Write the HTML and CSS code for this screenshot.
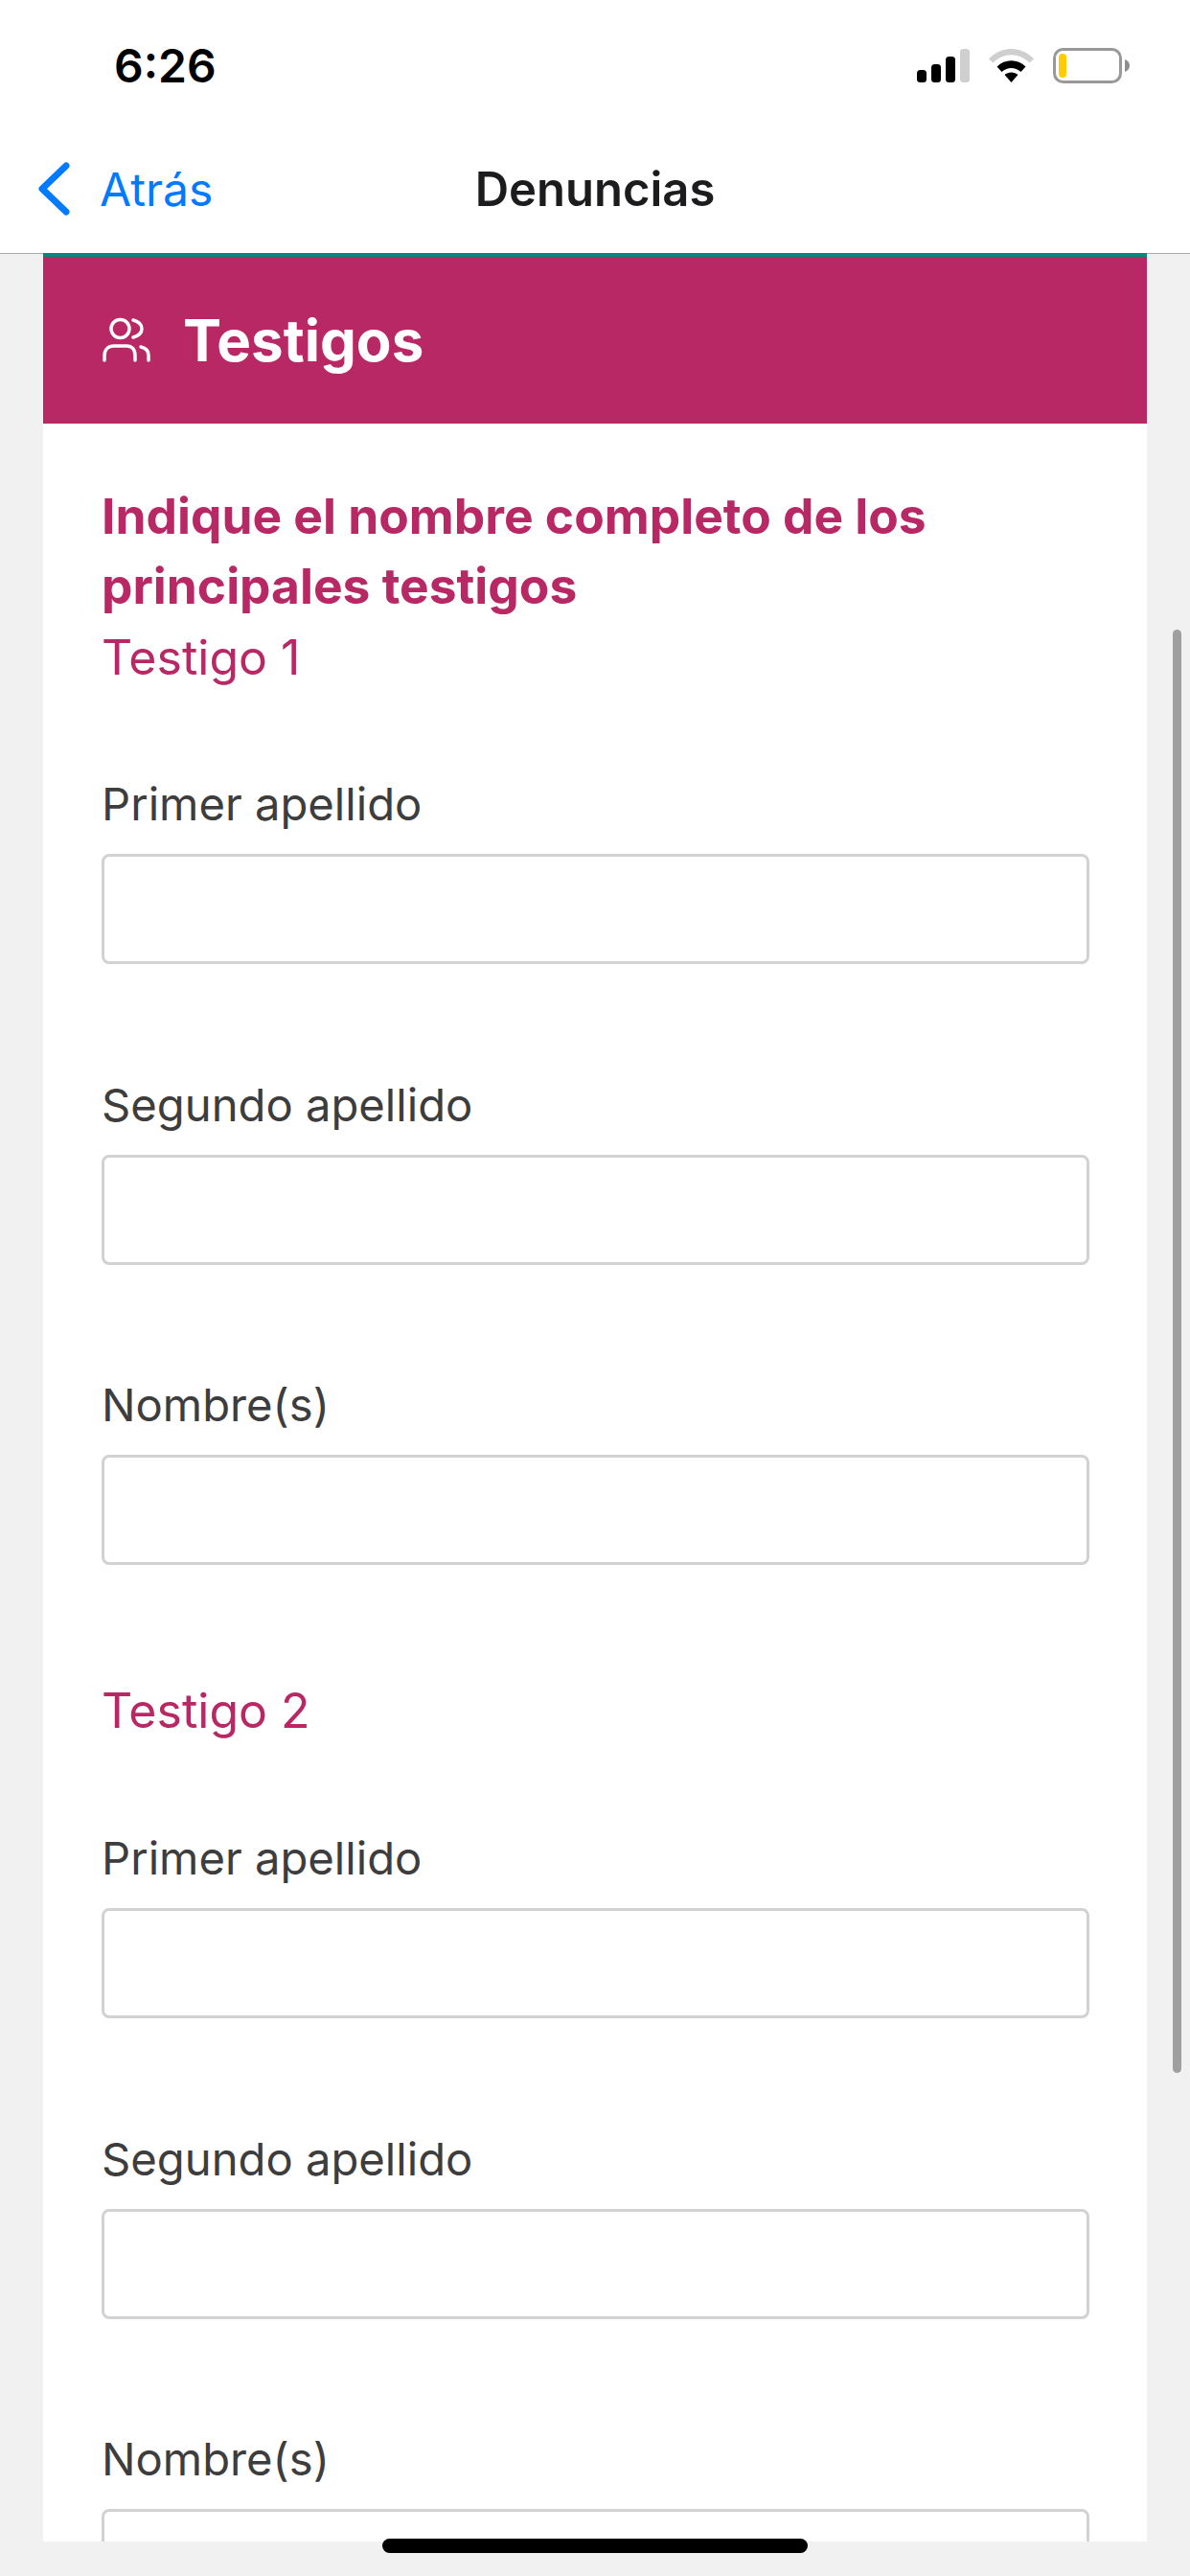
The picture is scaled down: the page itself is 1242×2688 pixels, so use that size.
FILE: index.html
```html
<!DOCTYPE html>
<html lang="es">
<head>
  <meta charset="UTF-8" />
  <meta name="viewport" content="width=device-width, initial-scale=1.0"/>
  <title>Denuncias</title>
  <link rel="stylesheet" href="styles.css">
</head>
<body>
  <div class="pantalla">
    <header class="cabecera">
      <div class="estado">
        <span class="hora">6:26</span>
        <div class="iconos-estado">
          <!-- señal -->
          <svg class="icono-senal" viewBox="0 0 55 35">
            <rect x="0" y="22" width="10" height="13" rx="3.5" fill="#000"/>
            <rect x="15" y="16" width="10" height="19" rx="3.5" fill="#000"/>
            <rect x="30" y="8" width="10" height="27" rx="3.5" fill="#000"/>
            <rect x="45" y="0" width="10" height="35" rx="3.5" fill="#cfcfcf"/>
          </svg>
          <!-- wifi -->
          <svg class="icono-wifi" viewBox="0 0 47 35">
            <path d="M0 10.500C13 -3.500 34 -3.500 47 10.500L42.500 14.500C31.500 3.500 15.500 3.500 4.500 14.500Z" fill="#cfcfcf"/>
            <path d="M8.500 18.500C17 10 30 10 38.500 18.500L33.500 24C27 18.500 20 18.500 13.500 24Z" fill="#000"/>
            <path d="M16.500 27C20.500 23.500 26.500 23.500 30.500 27L23.500 35Z" fill="#000"/>
          </svg>
          <!-- bateria -->
          <svg class="icono-bateria" viewBox="0 0 80 37">
            <rect x="1.500" y="1.500" width="69" height="34" rx="9" fill="none" stroke="#999" stroke-width="3"/>
            <rect x="6" y="6" width="8" height="25" rx="4" fill="#ffcc00"/>
            <path d="M75 12C78 13 80 15.500 80 18.500C80 21.500 78 24 75 25Z" fill="#8e8e8e"/>
          </svg>
        </div>
      </div>
      <nav class="barra">
        <a class="atras">
          <svg class="icono-atras" viewBox="0 0 33 56">
            <path d="M29 4L4 28L29 52" fill="none" stroke="#007aff" stroke-width="7" stroke-linecap="round" stroke-linejoin="round"/>
          </svg>
          <span>Atrás</span>
        </a>
        <h1 class="titulo">Denuncias</h1>
      </nav>
    </header>

    <main class="contenido">
      <section class="tarjeta">
        <div class="tarjeta-titulo">
          <svg class="icono-testigos" viewBox="0 0 50 50">
            <circle cx="18.500" cy="13" r="9.500" fill="none" stroke="#fff" stroke-width="3.500"/>
            <path d="M32 4C37.500 5.500 41 9 41 13C41 17 37.500 20.500 32 22" fill="none" stroke="#fff" stroke-width="3.500" stroke-linecap="round"/>
            <path d="M2 46V41C2 35 6 31 12 31H25C31 31 34 35 34 41V46" fill="none" stroke="#fff" stroke-width="3.500" stroke-linecap="round"/>
            <path d="M40 32C45 33 48 36.500 48 41V46" fill="none" stroke="#fff" stroke-width="3.500" stroke-linecap="round"/>
          </svg>
          <h2>Testigos</h2>
        </div>
        <div class="tarjeta-cuerpo">
          <p class="indicacion">Indique el nombre completo de los principales testigos</p>

          <h3 class="testigo testigo-1">Testigo 1</h3>
          <div class="campo">
            <label>Primer apellido</label>
            <input type="text">
          </div>
          <div class="campo">
            <label>Segundo apellido</label>
            <input type="text">
          </div>
          <div class="campo">
            <label>Nombre(s)</label>
            <input type="text">
          </div>

          <h3 class="testigo testigo-2">Testigo 2</h3>
          <div class="campo">
            <label>Primer apellido</label>
            <input type="text">
          </div>
          <div class="campo">
            <label>Segundo apellido</label>
            <input type="text">
          </div>
          <div class="campo">
            <label>Nombre(s)</label>
            <input type="text">
          </div>
        </div>
      </section>
      <div class="scroll"></div>
    </main>

    <div class="pie"></div>
    <div class="indicador"></div>
  </div>
</body>
</html>
```

FILE: styles.css
```css
* {
  box-sizing: border-box;
}

body {
  margin: 0;
  font-family: Inter, "Noto Sans", sans-serif;
  background: #f1f1f1;
}

.pantalla {
  position: relative;
  display: flex;
  flex-direction: column;
  height: 2688px;
  overflow: hidden;
}

/* CABECERA */
.cabecera {
  flex: none;
  height: 265px;
  background: white;
  border-bottom: 1px solid #ababab;
}

.estado {
  display: flex;
  justify-content: space-between;
  align-items: center;
  height: 136px;
  padding: 0 63px 0 119px;
}

.hora {
  font-size: 48px;
  font-weight: 600;
  color: black;
}

.iconos-estado {
  display: flex;
  align-items: center;
  gap: 20px;
}

.icono-senal {
  width: 55px;
  height: 35px;
}

.icono-wifi {
  width: 47px;
  height: 35px;
}

.icono-bateria {
  width: 80px;
  height: 37px;
}

.barra {
  display: grid;
  grid-template-columns: 1fr auto 1fr;
  align-items: center;
  height: 122px;
  padding: 0 40px;
}

.atras {
  display: flex;
  align-items: center;
  gap: 31px;
  font-size: 48px;
  color: #007aff;
}

.icono-atras {
  width: 33px;
  height: 56px;
}

.titulo {
  margin: 0;
  font-size: 49px;
  font-weight: 600;
  color: #1c1c1e;
}

/* CONTENIDO */
.contenido {
  position: relative;
  flex: 1;
  min-height: 0;
  padding: 0 45px;
}

/* sube 1px para tapar la linea de la cabecera */
.tarjeta {
  position: relative;
  height: calc(100% + 1px);
  margin-top: -1px;
  background: white;
  overflow: hidden;
}

.tarjeta-titulo {
  display: flex;
  align-items: center;
  gap: 34px;
  height: 178px;
  padding-left: 62px;
  background: #b72864;
  border-top: 4px solid #00897b;
  color: white;
}

.icono-testigos {
  width: 50px;
  height: 50px;
}

.tarjeta-titulo h2 {
  margin: 0;
  font-size: 60px;
  font-weight: 700;
}

.tarjeta-cuerpo {
  padding: 60px 60px 0 61px;
}

.indicacion {
  margin: 0;
  font-size: 51.500px;
  line-height: 73px;
  font-weight: 700;
  color: #b72864;
}

.testigo {
  margin: 0;
  font-size: 50px;
  line-height: 73px;
  font-weight: 400;
  color: #b72864;
}

.testigo-1 {
  margin-top: 2px;
}

.testigo-2 {
  margin-top: 116px;
}

.campo {
  margin-top: 118.500px;
}

.testigo-1 + .campo {
  margin-top: 88px;
}

.testigo-2 + .campo {
  margin-top: 89px;
}

.campo label {
  display: block;
  font-size: 47.200px;
  line-height: 56px;
  color: #3d3d3d;
}

.campo input {
  display: block;
  width: 100%;
  height: 115px;
  margin-top: 24px;
  background: white;
  border: 3px solid #d2d2d2;
  border-radius: 8px;
}

.scroll {
  position: absolute;
  top: 392px;
  right: 9px;
  width: 9px;
  height: 1506px;
  background: #9f9f9f;
  border-radius: 5px;
}

.pie {
  flex: none;
  height: 36px;
  background: #f1f1f1;
}

.indicador {
  position: absolute;
  left: 399px;
  bottom: 24px;
  width: 444px;
  height: 15px;
  background: black;
  border-radius: 8px;
}
```
